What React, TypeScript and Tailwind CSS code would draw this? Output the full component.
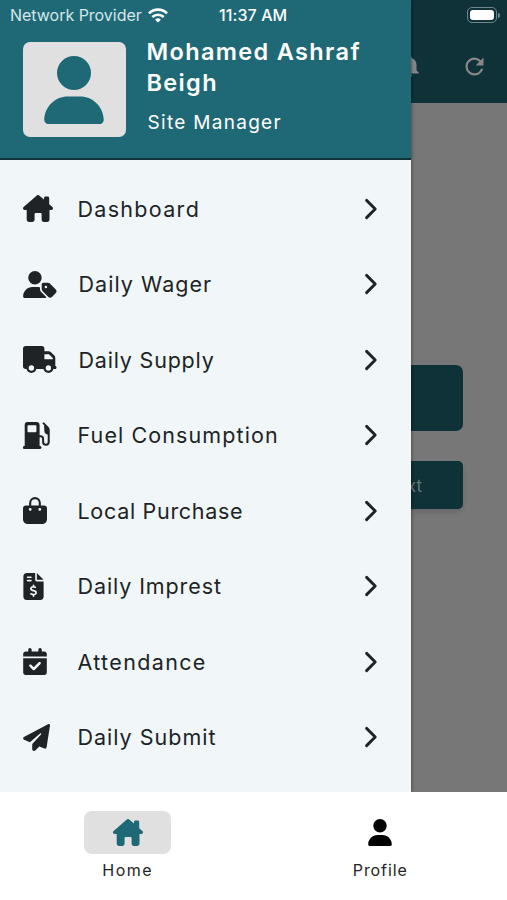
import type { ComponentType } from "react";
import { FaCalendarCheck, FaFileInvoiceDollar, FaUser, FaUserTag } from "react-icons/fa6";
import { MdNotifications, MdRefresh } from "react-icons/md";

type IconProps = { className?: string };
type MenuItem = { label: string; icon: ComponentType<IconProps>; box: string; text: string };

function HouseIcon({ className }: IconProps) {
  return (
    <svg className={className} viewBox="0 0 30 27" fill="currentColor">
      <path d="M13.8.5a1.8 1.8 0 0 1 2.4 0L21 4.6V3.2c0-1 .6-1.6 1.6-1.6h2c1 0 1.6.6 1.6 1.6v6l3.2 2.9c1.2 1.1.5 2.8-1 2.8h-1.9v9.6c0 1.5-1 2.5-2.5 2.5H21c-1.5 0-2.4-1-2.4-2.5v-5.2c0-.7-.5-1.2-1.2-1.2h-4.6c-.7 0-1.2.5-1.2 1.2v5.2c0 1.5-1 2.5-2.5 2.5H6.2c-1.5 0-2.5-1-2.5-2.5v-9.6H1.6c-1.5 0-2.2-1.7-1-2.8z" />
    </svg>
  );
}

function TruckIcon({ className }: IconProps) {
  return (
    <svg className={className} viewBox="0 0 34 27" fill="currentColor">
      <path
        fillRule="evenodd"
        d="M2.8 0h16c1.6 0 2.6 1 2.6 2.6v2.6h4.2c1 0 1.7.3 2.4 1l3.3 3.4c.7.7 1 1.4 1 2.4v8h.1c1.5.2 1.5 3 0 3H2.8C1 23 0 22 0 20.2V2.8C0 1 1 0 2.8 0zm18.6 8.2v5h8.4v-1.1l-3.9-3.9z"
      />
      {[8.4, 25.4].map((cx) => (
        <g key={cx}>
          <circle cx={cx} cy="22" r="5" />
          <circle cx={cx} cy="22" r="2.7" fill="#f1f7f8" />
        </g>
      ))}
    </svg>
  );
}

function FuelIcon({ className }: IconProps) {
  return (
    <svg className={className} viewBox="0 0 27 27" fill="currentColor">
      <path
        fillRule="evenodd"
        d="M4.6 0h8.8c2 0 3.2 1.2 3.2 3.2V24h.4c2 0 2 3 0 3H1.3c-1.8 0-1.8-3 0-3h.4V3.2C1.7 1.2 2.6 0 4.6 0zm.6 3.2c-.4 0-.7.3-.7.7v5.7c0 .4.3.7.7.7h7.5c.4 0 .7-.3.7-.7V3.9c0-.4-.3-.7-.7-.7z"
      />
      <path
        d="M16.5 14.3h1.3c1.5 0 2.3 1 2.3 2.5v3.1c0 3.7 5.6 3.7 5.6 0V8c0-1.1-.4-1.8-1.1-2.6l-4-4"
        fill="none"
        stroke="currentColor"
        strokeWidth="2"
        strokeLinecap="round"
      />
      <path d="M21 3.2 24.5 5l1.6 3v5.2l-2.9-1.1c-1.3-.5-1.8-1.6-1.8-3z" />
    </svg>
  );
}

function BagIcon({ className }: IconProps) {
  return (
    <svg className={className} viewBox="0 0 24 27" fill="currentColor">
      <path
        fillRule="evenodd"
        d="M3 8.4h18c1.9 0 3 1.1 3 3v10.3c0 3.3-2 5.3-5.3 5.3H5.3C2 27 0 25 0 21.700V11.400c0-1.900 1.100-3 3-3zm4.200 2.600a1.400 1.400 0 1 0 0 2.800 1.400 1.400 0 0 0 0-2.800zm9.600 0a1.400 1.400 0 1 0 0 2.800 1.400 1.400 0 0 0 0-2.800z"
      />
      <path d="M7.2 10V5.900a4.800 4.800 0 0 1 9.600 0V10" fill="none" stroke="currentColor" strokeWidth="2.1" />
    </svg>
  );
}

function PlaneIcon({ className }: IconProps) {
  return (
    <svg className={className} viewBox="0 0 27 27" fill="currentColor">
      <path d="M25 .3c1.200-.7 2.200 0 2 1.300l-3.400 21.700c-.2 1.200-1.200 1.700-2.200 1.300l-5.100-2.200-4 4.100c-1 1-3.100.4-3.100-1.200v-4.500c0-.5.200-.9.500-1.200l8.300-9.200c.6-.7-.2-1.500-.9-.9L6.900 18.200l-5.800-2.400c-1.300-.5-1.500-2.100-.2-2.900z" />
    </svg>
  );
}

function ChevronIcon({ className }: IconProps) {
  return (
    <svg className={className} viewBox="0 0 14 22" fill="none" stroke="currentColor" strokeWidth="2.9" strokeLinecap="round" strokeLinejoin="round">
      <path d="M2.600 2.400 11.200 11l-8.600 8.600" />
    </svg>
  );
}

const MENU: MenuItem[] = [
  { label: "Dashboard", icon: HouseIcon, box: "w-[30px]", text: "ml-[25px] tracking-[1.3px]" },
  { label: "Daily Wager", icon: FaUserTag, box: "w-[34px]", text: "ml-[22px] tracking-[1.05px]" },
  { label: "Daily Supply", icon: TruckIcon, box: "w-[34px]", text: "ml-[22px] tracking-[0.8px]" },
  { label: "Fuel Consumption", icon: FuelIcon, box: "w-[27px]", text: "ml-[28px] tracking-[1.1px]" },
  { label: "Local Purchase", icon: BagIcon, box: "w-[24px]", text: "ml-[31px] tracking-[0.7px]" },
  { label: "Daily Imprest", icon: FaFileInvoiceDollar, box: "w-[21px]", text: "ml-[34px] tracking-[0.9px]" },
  { label: "Attendance", icon: FaCalendarCheck, box: "w-[24px]", text: "ml-[31px] tracking-[1.35px]" },
  { label: "Daily Submit", icon: PlaneIcon, box: "w-[27px]", text: "ml-[28px] tracking-[1px]" },
];

function WifiIcon() {
  return (
    <svg className="h-[15px] w-[20px]" viewBox="0 0 20 15" fill="none" stroke="white" strokeWidth="2.6">
      <path d="M1 5.3a12.8 12.8 0 0 1 18 0" />
      <path d="M4.3 9a8.2 8.2 0 0 1 11.4 0" />
      <path d="M10 14.6 7.1 11.7a4.1 4.1 0 0 1 5.8 0z" fill="white" stroke="none" />
    </svg>
  );
}

function StatusBar() {
  return (
    <div className="absolute inset-x-0 top-0 z-20 flex h-[30px] items-center text-white">
      <span className="ml-[10px] w-[132px] whitespace-nowrap text-[16px] tracking-[-0.02px] text-[#d5e6e8]">
        Network Provider
      </span>
      <span className="ml-[6px]"><WifiIcon /></span>
      <span className="ml-[51px] whitespace-nowrap text-[16px] font-medium tracking-[0.1px]">11:37 AM</span>
      <div className="ml-auto mr-[7px] flex items-center gap-px">
        <div className="h-[16px] w-[30px] rounded-[5px] border border-[#71868a] p-[2px]">
          <div className="h-full rounded-[3px] bg-white" />
        </div>
        <div className="h-[5px] w-[2px] rounded-r-full bg-[#71868a]" />
      </div>
    </div>
  );
}

// Screen behind the drawer, already dimmed
function HomeScreen() {
  return (
    <div className="h-[792px] bg-[#777777]">
      <div className="flex h-[103px] items-start justify-end bg-[#0f3138] pt-[53px] text-[#8a8589]">
        <MdNotifications className="mr-[38px] size-[26px]" />
        <MdRefresh className="mr-[19px] size-[27px]" />
      </div>
      <div className="px-[44px] pt-[262px]">
        <div className="h-[66px] rounded-[7px] bg-[#0f3138]" />
        <div className="mt-[30px] flex h-[48px] items-center justify-end rounded-[5px] bg-[#0f3138] pr-[41px] pt-[3px] text-[17px] text-[#68777a] shadow-md">
          Next
        </div>
      </div>
    </div>
  );
}

function Drawer() {
  return (
    <aside className="absolute left-0 top-0 z-10 h-[792px] w-[411px] bg-[#f1f7f8] shadow-[1px_0_3px_rgba(0,0,0,0.35)]">
      <div className="flex h-[160px] border-b-2 border-[#12323a] bg-[#1f6977] pl-[22.5px]">
        <div className="mt-[42px] flex h-[95px] w-[103px] items-center justify-center rounded-[7px] bg-[#e0e0e0]">
          <FaUser className="h-[68px] w-[60px] text-[#1f6977]" />
        </div>
        <div className="ml-[21px] pt-[36px] text-white">
          <h1 className="w-[240px] text-[23.5px] font-semibold leading-[31px] tracking-[1.35px]">Mohamed Ashraf Beigh</h1>
          <p className="ml-[1px] mt-[11px] text-[19px] leading-[28px] tracking-[1.3px]">Site Manager</p>
        </div>
      </div>
      <nav className="pt-[11px]">
        {MENU.map(({ label, icon: Icon, box, text }) => (
          <button key={label} className="flex h-[75.5px] w-full items-center pl-[22.5px] pr-[33px] text-[#202326]">
            <Icon className={`h-[27px] shrink-0 ${box}`} />
            <span className={`whitespace-nowrap text-[21.5px] ${text}`}>{label}</span>
            <ChevronIcon className="ml-auto h-[22px] w-[14px]" />
          </button>
        ))}
      </nav>
    </aside>
  );
}

function BottomNav() {
  return (
    <footer className="relative z-20 grid h-[108px] grid-cols-2 bg-white pt-[19px] text-[16px] text-[#242424]">
      <div className="flex flex-col items-center pl-[2px]">
        <div className="flex h-[43px] w-[87px] items-center justify-center rounded-[8px] bg-[#e0e0e0]">
          <HouseIcon className="h-[27px] w-[30px] text-[#1f6977]" />
        </div>
        <span className="mt-[4px] tracking-[1.5px]">Home</span>
      </div>
      <div className="flex flex-col items-center">
        <div className="flex h-[43px] items-center">
          <FaUser className="h-[27px] w-[24px] text-black" />
        </div>
        <span className="mt-[4px] tracking-[0.9px]">Profile</span>
      </div>
    </footer>
  );
}

export default function App() {
  return (
    <div className="relative h-[900px] w-[507px] overflow-hidden bg-white font-['Inter',sans-serif]">
      <HomeScreen />
      <Drawer />
      <StatusBar />
      <BottomNav />
    </div>
  );
}
